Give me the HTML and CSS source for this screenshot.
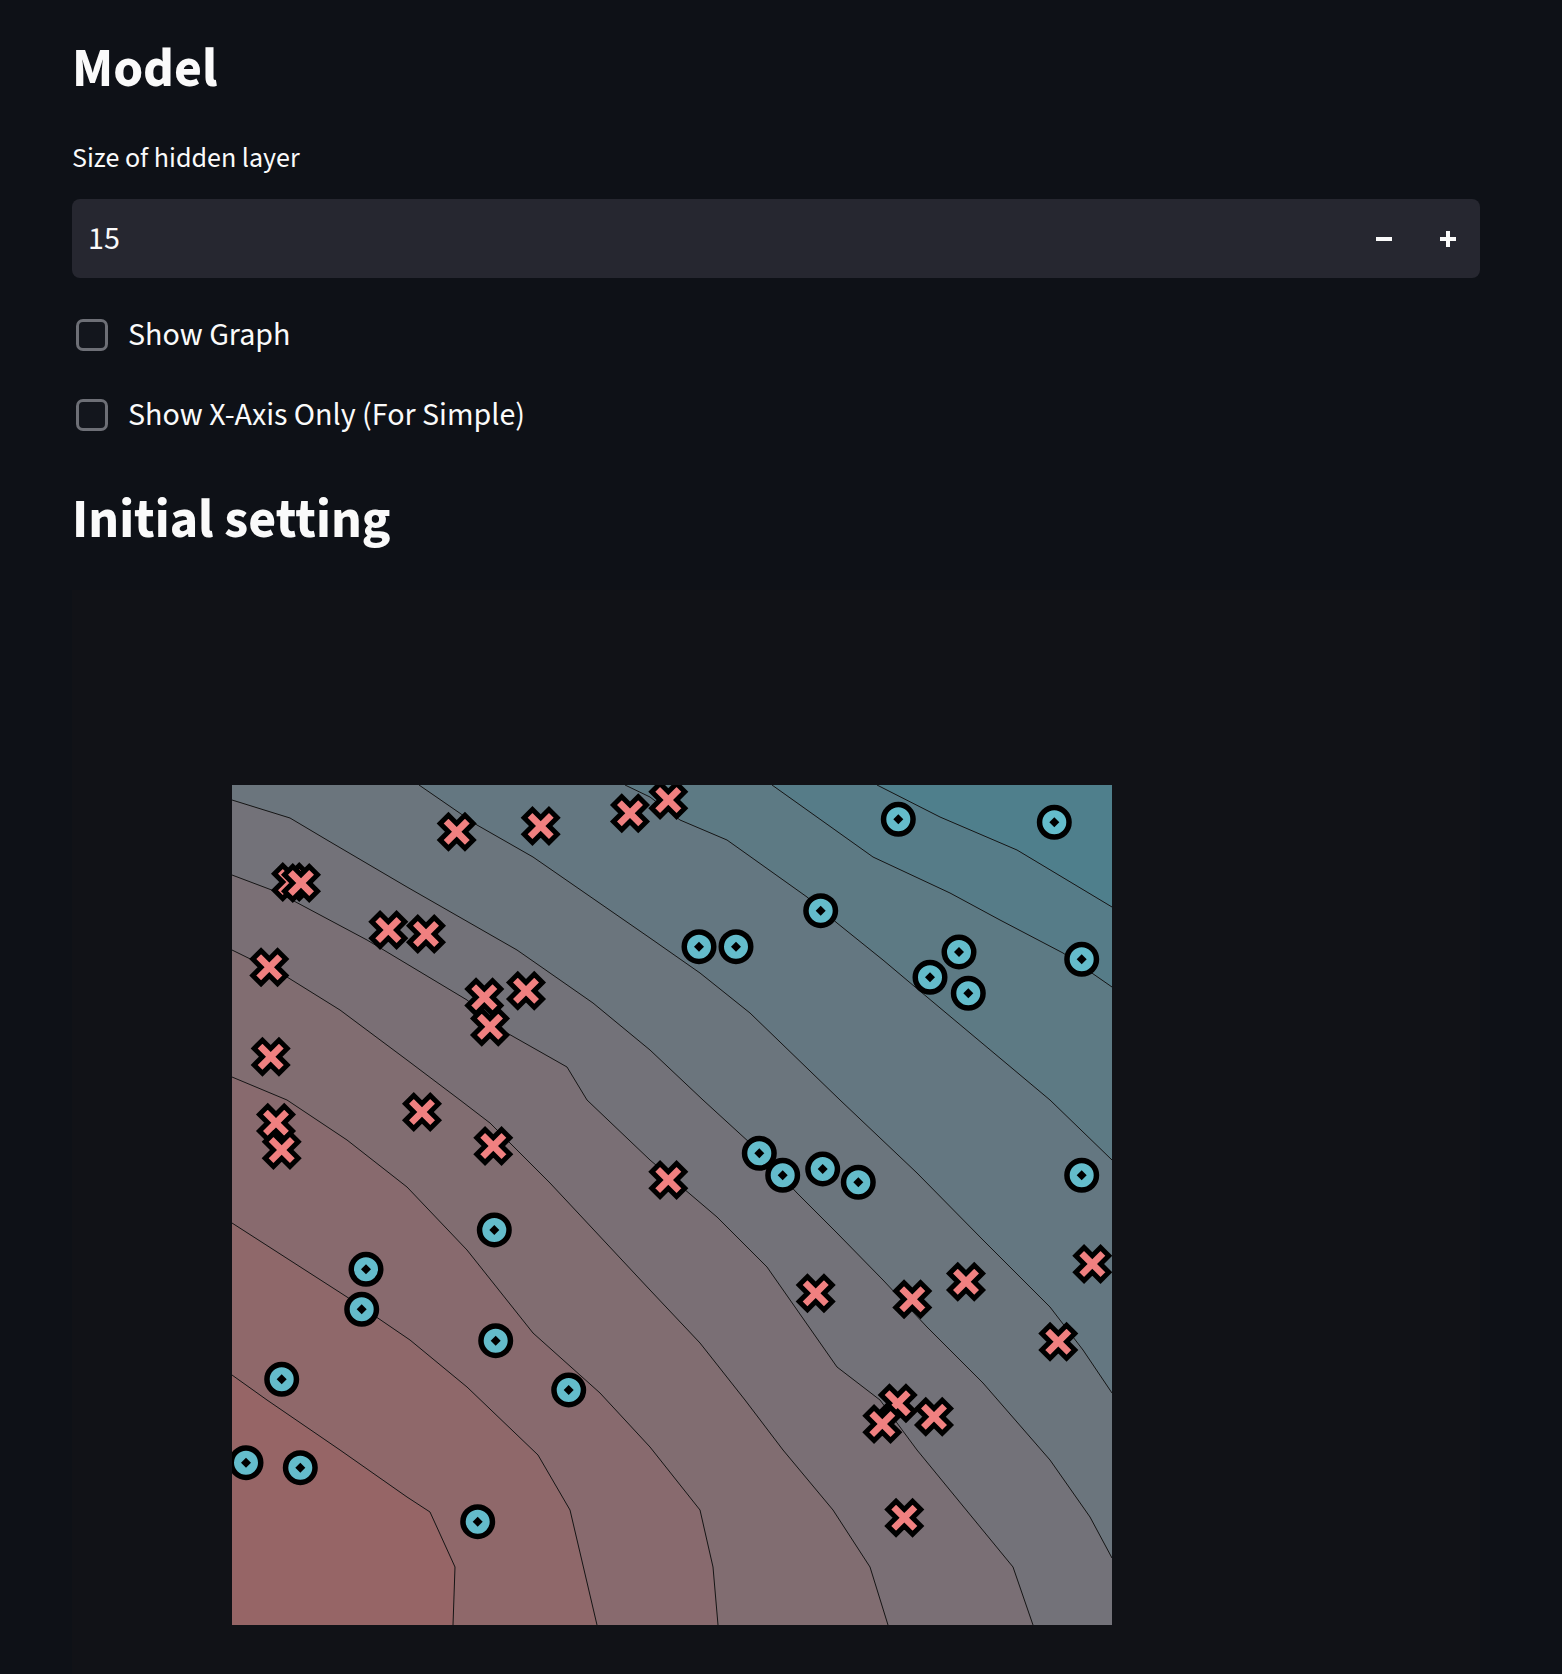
FILE: index.html
```html
<!DOCTYPE html>
<html lang="en">
<head>
<meta charset="utf-8">
<title>Model</title>
<link rel="stylesheet" href="styles.css">
</head>
<body>
<main class="main">
  <h3 class="heading">Model</h3>
  <div class="field">
    <label class="field-label">Size of hidden layer</label>
    <div class="number-input">
      <span class="value">15</span>
      <div class="steppers">
        <button class="step" type="button" aria-label="decrement">
          <svg width="16" height="16" viewBox="0 0 16 16"><rect x="0" y="6" width="16" height="4" fill="#fafafa"/></svg>
        </button>
        <button class="step" type="button" aria-label="increment">
          <svg width="16" height="16" viewBox="0 0 16 16"><rect x="0" y="6" width="16" height="4" fill="#fafafa"/><rect x="6" y="0" width="4" height="16" fill="#fafafa"/></svg>
        </button>
      </div>
    </div>
  </div>
  <label class="checkbox"><span class="box"></span><span class="cb-label">Show Graph</span></label>
  <label class="checkbox checkbox-2"><span class="box"></span><span class="cb-label">Show X-Axis Only (For Simple)</span></label>
  <h3 class="heading heading-2">Initial setting</h3>
  <div class="figure">
    <svg class="plot" width="880" height="840" viewBox="0 0 880 840">
      <defs>
        <path id="xm" d="M-8.25,-16.5 L0,-8.25 L8.25,-16.5 L16.5,-8.25 L8.25,0 L16.5,8.25 L8.25,16.5 L0,8.25 L-8.25,16.5 L-16.5,8.25 L-8.25,0 L-16.5,-8.25 Z" fill="#f08080" stroke="#000" stroke-width="5" stroke-linejoin="miter"/>
        <g id="om">
          <circle r="14.75" fill="#64bccb" stroke="#000" stroke-width="5.5"/>
          <path d="M0,-5 L5,0 L0,5 L-5,0 Z" fill="#000"/>
        </g>
      </defs>
      <rect width="880" height="840" fill="#4f7f8c"/>
      <polygon fill="#567c88" points="645,0 708,32 785,65 880,122 880,840 0,840 0,0"/>
      <polygon fill="#5d7a84" points="540,0 641,72 718,108 768,135 831,168 880,202 880,840 0,840 0,0"/>
      <polygon fill="#647781" points="393,0 418,12 448,35 495,55 575,112 605,138 651,175 695,212 818,315 880,375 880,840 0,840 0,0"/>
      <polygon fill="#6b757d" points="187,0 245,40 301,72 418,153 468,188 518,228 608,315 685,388 751,455 818,522 851,565 880,608 880,840 0,840 0,0"/>
      <polygon fill="#737279" points="0,15 58,33 95,55 175,102 285,165 361,218 418,265 471,315 518,358 565,408 605,448 651,495 695,542 751,598 818,675 858,732 880,773 880,840 0,840"/>
      <polygon fill="#7a6f75" points="0,90 45,107 135,155 235,215 275,248 335,282 355,315 418,375 485,432 535,482 605,582 648,615 685,665 781,782 801,840 0,840"/>
      <polygon fill="#816d71" points="0,165 55,192 108,225 175,275 228,315 258,338 318,398 418,505 468,558 513,615 551,665 601,725 638,782 656,840 0,840"/>
      <polygon fill="#886a6e" points="0,292 55,315 115,355 175,402 235,465 301,548 368,608 418,662 468,725 481,782 486,840 0,840"/>
      <polygon fill="#8f686a" points="0,438 115,512 178,555 235,602 306,670 338,725 365,840 0,840"/>
      <polygon fill="#966566" points="0,590 35,615 108,665 175,712 198,727 223,782 221,840 0,840"/>
      <g fill="none" stroke="#151515" stroke-width="1">
        <polyline points="645,0 708,32 785,65 880,122"/>
        <polyline points="540,0 641,72 718,108 768,135 831,168 880,202"/>
        <polyline points="393,0 418,12 448,35 495,55 575,112 605,138 651,175 695,212 818,315 880,375"/>
        <polyline points="187,0 245,40 301,72 418,153 468,188 518,228 608,315 685,388 751,455 818,522 851,565 880,608"/>
        <polyline points="0,15 58,33 95,55 175,102 285,165 361,218 418,265 471,315 518,358 565,408 605,448 651,495 695,542 751,598 818,675 858,732 880,773"/>
        <polyline points="0,90 45,107 135,155 235,215 275,248 335,282 355,315 418,375 485,432 535,482 605,582 648,615 685,665 781,782 801,840"/>
        <polyline points="0,165 55,192 108,225 175,275 228,315 258,338 318,398 418,505 468,558 513,615 551,665 601,725 638,782 656,840"/>
        <polyline points="0,292 55,315 115,355 175,402 235,465 301,548 368,608 418,662 468,725 481,782 486,840"/>
        <polyline points="0,438 115,512 178,555 235,602 306,670 338,725 365,840"/>
        <polyline points="0,590 35,615 108,665 175,712 198,727 223,782 221,840"/>
      </g>
      <g>
        <use href="#xm" x="224.7" y="46.7"/>
        <use href="#xm" x="308.7" y="41"/>
        <use href="#xm" x="398" y="28.3"/>
        <use href="#xm" x="436.3" y="15"/>
        <use href="#xm" x="59" y="97"/>
        <use href="#xm" x="69" y="98"/>
        <use href="#xm" x="156.3" y="145"/>
        <use href="#xm" x="194" y="149"/>
        <use href="#xm" x="37.3" y="182.3"/>
        <use href="#xm" x="252.3" y="212.3"/>
        <use href="#xm" x="294" y="205.7"/>
        <use href="#xm" x="258" y="241.7"/>
        <use href="#xm" x="38.7" y="271.7"/>
        <use href="#xm" x="190" y="327"/>
        <use href="#xm" x="44" y="337.7"/>
        <use href="#xm" x="49.7" y="365"/>
        <use href="#xm" x="261.3" y="361"/>
        <use href="#xm" x="436.3" y="395"/>
        <use href="#xm" x="583.7" y="508.3"/>
        <use href="#xm" x="680.3" y="514.3"/>
        <use href="#xm" x="734" y="496.7"/>
        <use href="#xm" x="860.3" y="479"/>
        <use href="#xm" x="826.3" y="556.7"/>
        <use href="#xm" x="665.7" y="618.3"/>
        <use href="#xm" x="650.3" y="639"/>
        <use href="#xm" x="702" y="631.7"/>
        <use href="#xm" x="672.3" y="732.7"/>
      </g>
      <g>
        <use href="#om" x="666.3" y="34.3"/>
        <use href="#om" x="822.3" y="37.3"/>
        <use href="#om" x="588.7" y="125.7"/>
        <use href="#om" x="467" y="161.7"/>
        <use href="#om" x="504" y="161.7"/>
        <use href="#om" x="727" y="167"/>
        <use href="#om" x="698" y="192.3"/>
        <use href="#om" x="736.3" y="208.3"/>
        <use href="#om" x="849.7" y="174.3"/>
        <use href="#om" x="527.3" y="368.3"/>
        <use href="#om" x="550.7" y="390.3"/>
        <use href="#om" x="590.7" y="384"/>
        <use href="#om" x="626.3" y="397.3"/>
        <use href="#om" x="849.7" y="390.3"/>
        <use href="#om" x="262.3" y="445"/>
        <use href="#om" x="134" y="484.3"/>
        <use href="#om" x="129.7" y="524.3"/>
        <use href="#om" x="263.7" y="555.7"/>
        <use href="#om" x="49.7" y="594.3"/>
        <use href="#om" x="336.7" y="605"/>
        <use href="#om" x="14" y="677.7"/>
        <use href="#om" x="68.3" y="682.7"/>
        <use href="#om" x="245.7" y="736.7"/>
      </g>
    </svg>
  </div>
</main>
</body>
</html>
```

FILE: styles.css
```css
* {
  box-sizing: border-box;
}

html, body {
  margin: 0;
  padding: 0;
  background: #0e1117;
}

body {
  color: #fafafa;
  font-family: "Source Sans Pro", "Source Sans 3", Lato, "Noto Sans", sans-serif;
  overflow: hidden;
  height: 1674px;
}

.main {
  width: 1480px;
  padding: 37px 0 0 72px;
}

.heading {
  margin: 0;
  font-size: 54px;
  line-height: 66px;
  font-weight: 700;
  color: #fafafa;
}

.field {
  margin-top: 39px;
}

.field-label {
  display: block;
  font-size: 28px;
  line-height: 32px;
  margin-bottom: 25px;
}

.number-input {
  display: flex;
  align-items: center;
  height: 79px;
  background: #262730;
  border-radius: 8px;
}

.value {
  flex: 1;
  padding-left: 16px;
  font-size: 32px;
}

.steppers {
  display: flex;
  height: 100%;
}

.step {
  width: 64px;
  height: 100%;
  display: flex;
  align-items: center;
  justify-content: center;
  background: none;
  border: 0;
  padding: 0;
}

.checkbox {
  display: flex;
  align-items: center;
  gap: 20px;
  height: 32px;
  margin-top: 41px;
  padding-left: 4px;
}

.checkbox-2 {
  margin-top: 48px;
}

.box {
  width: 32px;
  height: 32px;
  border: 3px solid #6d6f76;
  border-radius: 7px;
  background: #13161d;
  flex: none;
}

.cb-label {
  font-size: 32px;
  line-height: 32px;
}

.heading-2 {
  margin-top: 57px;
}

.figure {
  margin-top: 36px;
  height: 1100px;
  width: 1408px;
  background: #111217;
  padding: 195px 0 0 160px;
}

.plot {
  display: block;
}
```
